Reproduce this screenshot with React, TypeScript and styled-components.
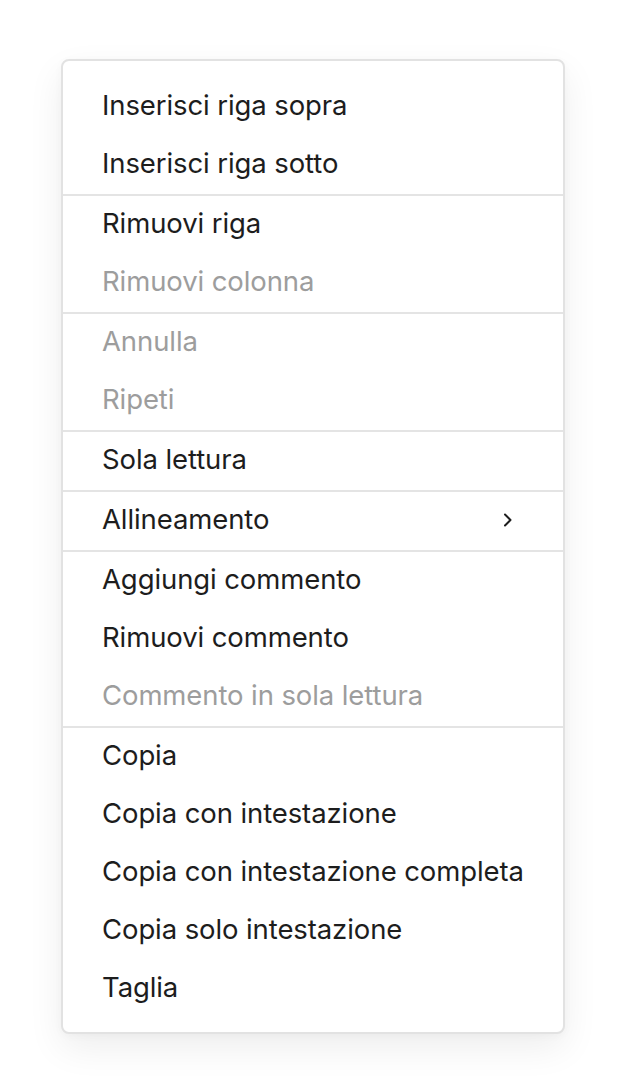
import React from "react";
import styled, { createGlobalStyle } from "styled-components";

const Global = createGlobalStyle`
  html, body { margin: 0; padding: 0; background: #ffffff; }
  body { font-family: Inter, "Noto Sans", "Liberation Sans", sans-serif; -webkit-font-smoothing: antialiased; }
`;

const Page = styled.div`
  padding: 59px 0 0 61px;
  height: 1091px;
  box-sizing: border-box;
`;

const Menu = styled.div`
  width: 504px;
  box-sizing: border-box;
  background: #ffffff;
  border: 2px solid #e2e2e2;
  border-radius: 8px;
  padding: 17px 0 14px;
  box-shadow: 0 14px 36px rgba(0, 0, 0, 0.07), 0 2px 8px rgba(0, 0, 0, 0.03);
  display: flex;
  flex-direction: column;
`;

const Group = styled.div`
  display: flex;
  flex-direction: column;
`;

const Separator = styled.div`
  height: 2px;
  background: #e4e4e4;
`;

const Item = styled.div<{ $disabled?: boolean }>`
  height: 58px;
  box-sizing: border-box;
  display: flex;
  align-items: center;
  justify-content: space-between;
  padding: 0 50px 2px 39px;
  font-size: 27.5px;
  line-height: 1;
  letter-spacing: -0.1px;
  color: ${(p) => (p.$disabled ? "#9d9d9d" : "#1d1d1d")};
  white-space: nowrap;
`;

const Chevron = () => (
  <svg width="10" height="14" viewBox="0 0 10 14" fill="none">
    <path d="M2 1.5 L7.5 7 L2 12.5" stroke="#1d1d1d" strokeWidth="2" strokeLinecap="round" strokeLinejoin="round" />
  </svg>
);

type Entry = { label: string; disabled?: boolean; submenu?: boolean };

const groups: Entry[][] = [
  [{ label: "Inserisci riga sopra" }, { label: "Inserisci riga sotto" }],
  [{ label: "Rimuovi riga" }, { label: "Rimuovi colonna", disabled: true }],
  [{ label: "Annulla", disabled: true }, { label: "Ripeti", disabled: true }],
  [{ label: "Sola lettura" }],
  [{ label: "Allineamento", submenu: true }],
  [
    { label: "Aggiungi commento" },
    { label: "Rimuovi commento" },
    { label: "Commento in sola lettura", disabled: true },
  ],
  [
    { label: "Copia" },
    { label: "Copia con intestazione" },
    { label: "Copia con intestazione completa" },
    { label: "Copia solo intestazione" },
    { label: "Taglia" },
  ],
];

export default function App() {
  return (
    <>
      <Global />
      <Page>
        <Menu>
          {groups.map((g, gi) => (
            <React.Fragment key={gi}>
              {gi > 0 && <Separator />}
              <Group>
                {g.map((e) => (
                  <Item key={e.label} $disabled={e.disabled}>
                    <span>{e.label}</span>
                    {e.submenu && <Chevron />}
                  </Item>
                ))}
              </Group>
            </React.Fragment>
          ))}
        </Menu>
      </Page>
    </>
  );
}
